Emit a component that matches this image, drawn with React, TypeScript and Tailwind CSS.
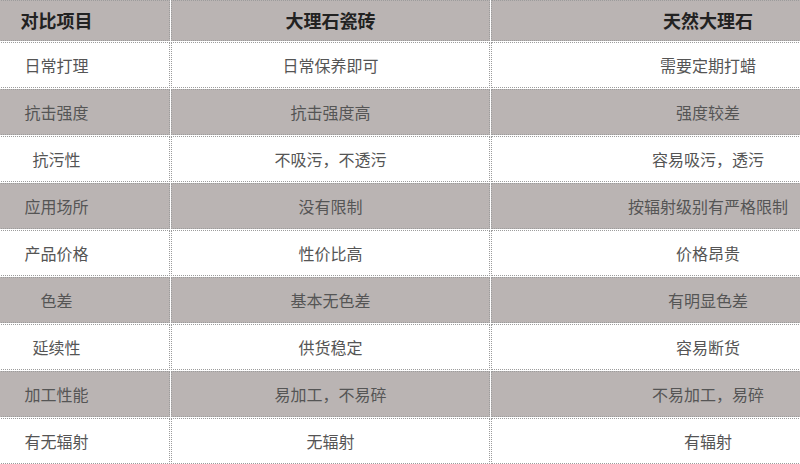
import React from "react";

const rows: [string, string, string][] = [
  ["日常打理", "日常保养即可", "需要定期打蜡"],
  ["抗击强度", "抗击强度高", "强度较差"],
  ["抗污性", "不吸污，不透污", "容易吸污，透污"],
  ["应用场所", "没有限制", "按辐射级别有严格限制"],
  ["产品价格", "性价比高", "价格昂贵"],
  ["色差", "基本无色差", "有明显色差"],
  ["延续性", "供货稳定", "容易断货"],
  ["加工性能", "易加工，不易碎", "不易加工，易碎"],
  ["有无辐射", "无辐射", "有辐射"],
];

const cell = "border border-dotted border-[#9c9c9c] text-center align-middle p-0";

export default function App() {
  return (
    <div
      className="w-[800px] h-[464px] overflow-hidden bg-white"
      style={{ fontFamily: '"Microsoft YaHei", "Noto Sans CJK SC", sans-serif' }}
    >
      <table className="-ml-[58px] -mt-px w-[980px] table-fixed border-separate border-spacing-px">
        <colgroup>
          <col className="w-[227px]" />
          <col className="w-[319px]" />
          <col className="w-[434px]" />
        </colgroup>
        <thead>
          <tr className="h-[41px] bg-[#bab4b3] text-[18px] font-bold text-[#222]">
            <th className={cell}>对比项目</th>
            <th className={cell}>大理石瓷砖</th>
            <th className={cell}>天然大理石</th>
          </tr>
        </thead>
        <tbody>
          {rows.map((r, i) => (
            <tr
              key={i}
              className={`h-[46px] text-[16px] text-[#555] ${i % 2 === 1 ? "bg-[#bab4b3]" : "bg-white"}`}
            >
              <td className={cell}>{r[0]}</td>
              <td className={cell}>{r[1]}</td>
              <td className={cell}>{r[2]}</td>
            </tr>
          ))}
        </tbody>
      </table>
    </div>
  );
}
